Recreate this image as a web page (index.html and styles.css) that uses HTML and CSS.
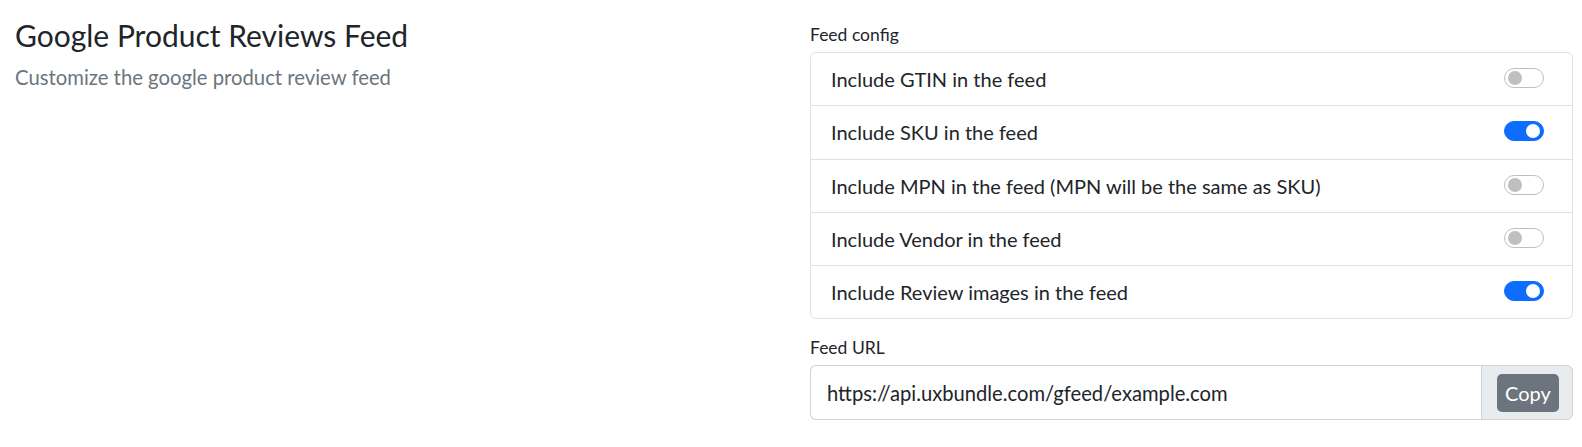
FILE: index.html
```html
<!DOCTYPE html>
<html lang="en">
<head>
<meta charset="utf-8">
<title>Google Product Reviews Feed</title>
<link rel="stylesheet" href="styles.css">
</head>
<body>
<div class="page">
  <div class="intro">
    <h1 class="title">Google Product Reviews Feed</h1>
    <p class="lead">Customize the google product review feed</p>
  </div>
  <div class="settings">
    <div class="label">Feed config</div>
    <ul class="list">
      <li class="item"><span>Include GTIN in the feed</span><span class="switch"></span></li>
      <li class="item"><span>Include SKU in the feed</span><span class="switch on"></span></li>
      <li class="item"><span>Include MPN in the feed (MPN will be the same as SKU)</span><span class="switch"></span></li>
      <li class="item"><span>Include Vendor in the feed</span><span class="switch"></span></li>
      <li class="item"><span>Include Review images in the feed</span><span class="switch on"></span></li>
    </ul>
    <div class="label label-url">Feed URL</div>
    <div class="input-group">
      <div class="input">https://api.uxbundle.com/gfeed/example.com</div>
      <div class="addon"><button class="btn">Copy</button></div>
    </div>
  </div>
</div>
</body>
</html>
```
FILE: styles.css
```css
* { box-sizing: border-box; }
body {
  margin: 0;
  font-family: Lato, "Noto Sans", sans-serif;
  color: #212529;
  background: #fff;
}
.page {
  display: grid;
  grid-template-columns: 1fr 763px;
  padding: 0 9px 0 15px;
}
.intro { padding-top: 18px; }
.title {
  margin: 0;
  font-size: 30px;
  font-weight: 400;
  line-height: 35px;
}
.lead {
  margin: 9px 0 0;
  font-size: 20.3px;
  line-height: 30px;
  color: #6c757d;
}
.settings { padding-top: 22px; }
.label {
  font-size: 17.5px;
  line-height: 25px;
  margin-bottom: 5px;
}
.label-url { margin-top: 16px; }
.list {
  list-style: none;
  margin: 0;
  padding: 0;
  border: 1px solid #dee2e6;
  border-radius: 6px;
}
.item {
  box-sizing: content-box;
  display: flex;
  align-items: center;
  justify-content: space-between;
  height: 52.3px;
  padding: 0 28px 0 20px;
  font-size: 20px;
  line-height: 30px;
}
.item + .item { border-top: 1px solid #dee2e6; }
.switch {
  position: relative;
  width: 40px;
  height: 20px;
  margin-top: -2px;
  border: 1px solid #bfbfbf;
  border-radius: 10px;
  background: #fff;
  flex: none;
}
.switch::after {
  content: "";
  position: absolute;
  top: 2px;
  left: 3px;
  width: 14px;
  height: 14px;
  border-radius: 50%;
  background: #bfbfbf;
}
.switch.on {
  background: #0d6efd;
  border-color: #0d6efd;
}
.switch.on::after {
  left: auto;
  right: 3px;
  background: #fff;
}
.input-group {
  display: flex;
  height: 55px;
}
.input {
  flex: 1;
  display: flex;
  align-items: center;
  padding: 0 16px;
  border: 1px solid #ced4da;
  border-right: 0;
  border-radius: 6px 0 0 6px;
  font-size: 20.2px;
  line-height: 30px;
}
.addon {
  display: flex;
  align-items: flex-start;
  padding: 8px 13px 0 15px;
  background: #e9ecef;
  border: 1px solid #ced4da;
  border-radius: 0 6px 6px 0;
}
.btn {
  width: 62px;
  height: 38px;
  padding: 0;
  border: 0;
  border-radius: 5px;
  background: #6c757d;
  color: #fff;
  font-family: inherit;
  font-size: 20px;
  line-height: 38px;
  text-align: center;
}
```
